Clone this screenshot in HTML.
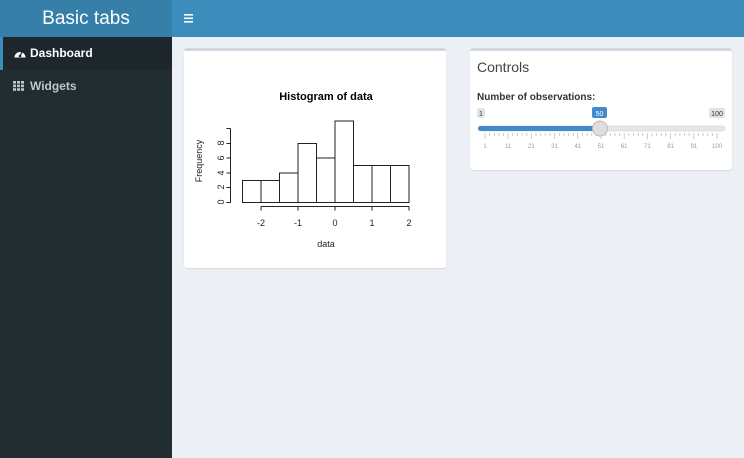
<!DOCTYPE html>
<html><head><meta charset="utf-8"><style>
*{margin:0;padding:0;box-sizing:border-box}
body{width:744px;height:458px;overflow:hidden;background:#ecf0f5;font-family:"Liberation Sans",sans-serif;position:relative}
.logo{position:absolute;left:0;top:0;width:172px;height:37px;background:#367fa9;color:#fff;font-size:19px;text-align:center;line-height:37px}
.nav{position:absolute;left:172px;top:0;right:0;height:37px;background:#3c8dbc}
.side{position:absolute;left:0;top:37px;width:172px;bottom:0;background:#222d32}
.item{height:33px;line-height:33px;font-size:12px;color:#b8c7ce;padding-left:30px;position:relative;font-weight:bold}
.item.act{background:#1e282c;color:#fff;border-left:3px solid #3c8dbc;padding-left:27px}
.box{position:absolute;background:#fff;border-top:3px solid #d2d6de;border-radius:3px;box-shadow:0 1px 1px rgba(0,0,0,.1)}
</style></head><body>
<div class="logo">Basic tabs</div>
<div class="nav"><svg style="position:absolute;left:12px;top:14px" width="9" height="9"><rect y="0" width="9" height="1.6" fill="#fff"/><rect y="3.5" width="9" height="1.6" fill="#fff"/><rect y="7" width="9" height="1.6" fill="#fff"/></svg></div>
<div class="side">
<div class="item act"><svg style="position:absolute;left:11px;top:11px" width="12" height="10"><path d="M0.5 9.5 A5.5 5.5 0 0 1 11.5 9.5 Z" fill="#fff"/><path d="M6 8 L8 4" stroke="#1e282c" stroke-width="1.3"/><circle cx="6" cy="8" r="1.3" fill="#1e282c"/></svg>Dashboard</div>
<div class="item"><svg style="position:absolute;left:13px;top:11px" width="11" height="10"><g fill="#b8c7ce"><rect x="0" y="0" width="3" height="2.6"/><rect x="4" y="0" width="3" height="2.6"/><rect x="8" y="0" width="3" height="2.6"/><rect x="0" y="3.6" width="3" height="2.6"/><rect x="4" y="3.6" width="3" height="2.6"/><rect x="8" y="3.6" width="3" height="2.6"/><rect x="0" y="7.2" width="3" height="2.6"/><rect x="4" y="7.2" width="3" height="2.6"/><rect x="8" y="7.2" width="3" height="2.6"/></g></svg>Widgets</div>
</div>
<div class="box" style="left:184px;top:48px;width:262px;height:220px"></div>
<div class="box" style="left:470px;top:48px;width:262px;height:122px">
<div style="position:absolute;left:7px;top:8px;font-size:14px;color:#444">Controls</div>
<div style="position:absolute;left:7px;top:41px;font-size:10px;font-weight:bold;color:#333">Number of observations:</div>
</div>
<svg style="position:absolute;left:0;top:0" width="744" height="458" font-family="Liberation Sans,sans-serif">
<text x="326" y="100" font-size="11" font-weight="bold" text-anchor="middle">Histogram of data</text>
<g fill="none" stroke="#222" stroke-width="1">
<rect x="242.5" y="180.5" width="18.5" height="22"/>
<rect x="261" y="180.5" width="18.5" height="22"/>
<rect x="279.5" y="173" width="18.5" height="29.5"/>
<rect x="298" y="143.5" width="18.5" height="59"/>
<rect x="316.5" y="158" width="18.5" height="44.5"/>
<rect x="335" y="121" width="18.5" height="81.5"/>
<rect x="353.5" y="165.5" width="18.5" height="37"/>
<rect x="372" y="165.5" width="18.5" height="37"/>
<rect x="390.5" y="165.5" width="18.5" height="37"/>
<path d="M230.5 202.5V128.5M230.5 202.5h-4M230.5 187.5h-4M230.5 173h-4M230.5 158h-4M230.5 143.5h-4M230.5 128.5h-4"/>
<path d="M261 206.5H409M261 206.5v4M298 206.5v4M335 206.5v4M372 206.5v4M409 206.5v4"/>
</g>
<g font-size="9" text-anchor="middle" fill="#222">
<text x="261" y="226">-2</text><text x="298" y="226">-1</text><text x="335" y="226">0</text><text x="372" y="226">1</text><text x="409" y="226">2</text>
<text x="326" y="247">data</text>
<g transform="rotate(-90)"><text x="-202" y="224">0</text><text x="-187" y="224">2</text><text x="-173" y="224">4</text><text x="-158" y="224">6</text><text x="-143" y="224">8</text><text x="-161" y="202">Frequency</text></g>
</g>
<rect x="477" y="108" width="8" height="10" rx="2" fill="#e3e3e3"/><text x="481" y="116" font-size="7" text-anchor="middle" fill="#333">1</text>
<rect x="592" y="107" width="15" height="11" rx="2" fill="#428bca"/><text x="599.5" y="116" font-size="7" text-anchor="middle" fill="#fff">50</text>
<rect x="709" y="108" width="16" height="10" rx="2" fill="#e3e3e3"/><text x="717" y="116" font-size="7" text-anchor="middle" fill="#333">100</text>
<rect x="478" y="126" width="247" height="5" rx="2.5" fill="#e6e6e6" stroke="#ccc" stroke-width="0.5"/>
<rect x="478" y="126" width="122" height="5" rx="2.5" fill="#428bca"/>
<g stroke="#c0c8d0" stroke-width="0.8" id="t"></g>
<g stroke="#b0c4dc" stroke-width="0.8">
<path d="M485 133v6M508.2 133v6M531.4 133v6M554.6 133v6M577.8 133v6M601 133v6M624.2 133v6M647.4 133v6M670.6 133v6M693.8 133v6M717 133v6"/>
<path d="M489.6 133v3M494.3 133v3M498.9 133v3M503.6 133v3M512.8 133v3M517.5 133v3M522.1 133v3M526.8 133v3M536 133v3M540.7 133v3M545.3 133v3M550 133v3M559.2 133v3M563.9 133v3M568.5 133v3M573.2 133v3M582.4 133v3M587.1 133v3M591.7 133v3M596.4 133v3M605.6 133v3M610.3 133v3M614.9 133v3M619.6 133v3M628.8 133v3M633.5 133v3M638.1 133v3M642.8 133v3M652 133v3M656.7 133v3M661.3 133v3M666 133v3M675.2 133v3M679.9 133v3M684.5 133v3M689.2 133v3M698.4 133v3M703.1 133v3M707.7 133v3M712.4 133v3"/>
</g>
<g font-size="6" fill="#999" text-anchor="middle">
<text x="485" y="148">1</text><text x="508.2" y="148">11</text><text x="531.4" y="148">21</text><text x="554.6" y="148">31</text><text x="577.8" y="148">41</text><text x="601" y="148">51</text><text x="624.2" y="148">61</text><text x="647.4" y="148">71</text><text x="670.6" y="148">81</text><text x="693.8" y="148">91</text><text x="717" y="148">100</text>
</g>
<circle cx="600" cy="128.5" r="7.5" fill="#dedede" stroke="#bbb" stroke-width="1"/>
</svg>
</body></html>
